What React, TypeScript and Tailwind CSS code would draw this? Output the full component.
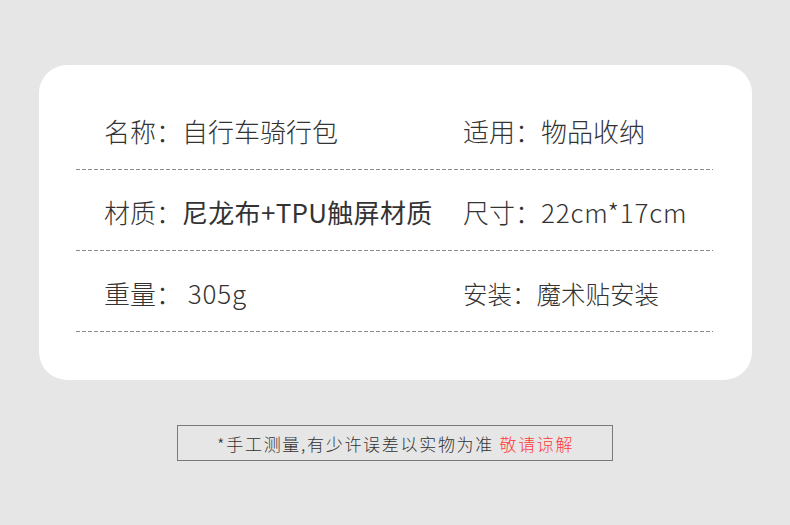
import React from "react";

const rows: [React.ReactNode, React.ReactNode][] = [
  ["名称：自行车骑行包", "适用：物品收纳"],
  [
    <>
      材质：<span className="font-normal tracking-[0.3px]">尼龙布+TPU触屏材质</span>
    </>,
    <>
      尺寸：<span className="tracking-[0.8px]">22cm*17cm</span>
    </>,
  ],
  [
    <>
      重量： <span className="tracking-[0.8px]">305g</span>
    </>,
    <span className="text-[24.5px]">安装：魔术贴安装</span>,
  ],
];

export default function App() {
  return (
    <div
      className="w-[790px] h-[525px] bg-[#e6e6e6] flex flex-col items-start overflow-hidden"
      style={{ fontFamily: '"Noto Sans CJK SC", "Noto Sans", sans-serif' }}
    >
      <div className="mt-[65px] ml-[39px] w-[713px] h-[315px] bg-white rounded-[28px] pt-[24px] pl-[37px]">
        {rows.map(([a, b], i) => (
          <div key={i} className="w-[637px] flex flex-col">
            <div className="h-[80px] flex items-center text-[26px] text-[#333] leading-none pt-[4px] font-light">
              <div className="w-[387px] pl-[28px] whitespace-nowrap">{a}</div>
              <div className="whitespace-nowrap">{b}</div>
            </div>
            <div className="h-px bg-[repeating-linear-gradient(to_right,#8a8a8a_0_4px,transparent_4px_6px)]" />
          </div>
        ))}
      </div>
      <div className="mt-[45px] ml-[177px] w-[436px] h-[36px] border-[1.5px] border-[#7a7a7a] flex items-center pl-[39px] text-[17px] tracking-[1.7px] text-[#333] whitespace-nowrap leading-none font-light">
        *手工测量,有少许误差以实物为准&nbsp;<span className="text-[#ff3a3a]">敬请谅解</span>
      </div>
    </div>
  );
}
